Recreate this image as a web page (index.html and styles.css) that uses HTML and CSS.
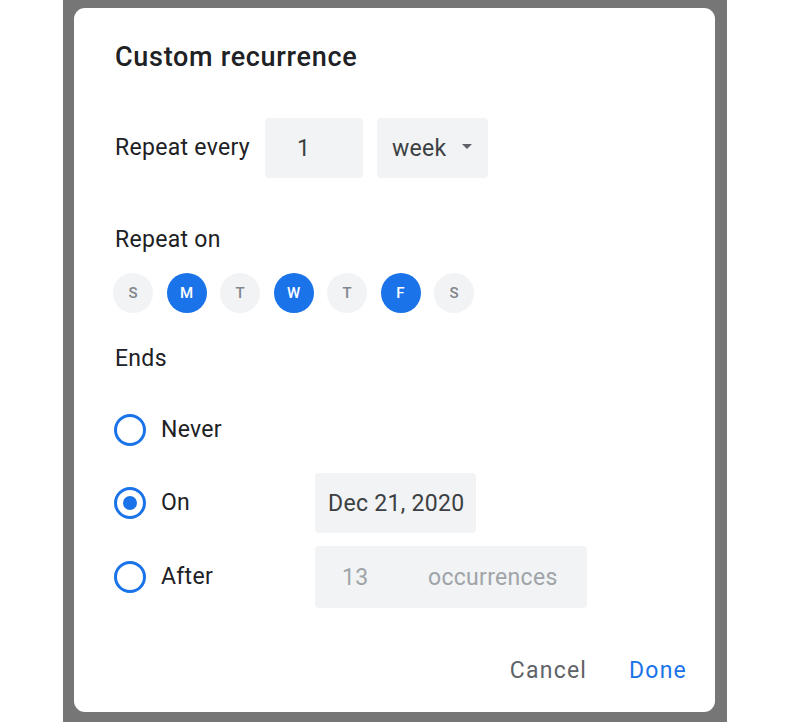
FILE: index.html
```html
<!DOCTYPE html>
<html lang="en">
<head>
<meta charset="utf-8">
<title>Custom recurrence</title>
<link rel="stylesheet" href="styles.css">
</head>
<body>
<div class="frame">
  <div class="dialog">
    <h1 class="title">Custom recurrence</h1>

    <div class="repeat-row">
      <span class="label">Repeat every</span>
      <div class="box box-num">1</div>
      <div class="box box-select">
        <span>week</span>
        <span class="caret"></span>
      </div>
    </div>

    <div class="label section-label">Repeat on</div>
    <div class="days">
      <span class="day">S</span>
      <span class="day on">M</span>
      <span class="day">T</span>
      <span class="day on">W</span>
      <span class="day">T</span>
      <span class="day on">F</span>
      <span class="day">S</span>
    </div>

    <div class="label ends-label">Ends</div>
    <div class="ends">
      <div class="end-row">
        <span class="radio"></span>
        <span class="label">Never</span>
      </div>
      <div class="end-row">
        <span class="radio checked"></span>
        <span class="label">On</span>
        <div class="box box-date">Dec 21, 2020</div>
      </div>
      <div class="end-row">
        <span class="radio"></span>
        <span class="label">After</span>
        <div class="box box-occ disabled">
          <span class="occ-num">13</span>
          <span>occurrences</span>
        </div>
      </div>
    </div>

    <div class="actions">
      <button class="btn btn-cancel">Cancel</button>
      <button class="btn btn-done">Done</button>
    </div>
  </div>
</div>
</body>
</html>
```

FILE: styles.css
```css
* { box-sizing: border-box; }

html, body {
  margin: 0;
  padding: 0;
  background: #ffffff;
}

body {
  font-family: Roboto, "Liberation Sans", Arial, sans-serif;
  color: #202124;
}

.frame {
  margin-left: 63px;
  width: 664px;
  height: 722px;
  background: #767676;
  padding: 8px 12px 10px 11px;
}

.dialog {
  background: #ffffff;
  border-radius: 11px;
  height: 704px;
  padding: 34px 28px 0 41px;
  display: flex;
  flex-direction: column;
}

.title {
  margin: 0;
  font-size: 27px;
  font-weight: 500;
  line-height: 30px;
  color: #202124;
  letter-spacing: 0.7px;
}

.label {
  font-size: 23px;
  line-height: 24px;
  letter-spacing: 0.3px;
  color: #202124;
}

.repeat-row {
  margin-top: 46px;
  display: flex;
  align-items: center;
  height: 60px;
}

.box {
  background: #f1f3f4;
  border-radius: 4px;
  height: 60px;
  display: flex;
  align-items: center;
  font-size: 23px;
  letter-spacing: 0.3px;
  color: #3c4043;
}

.repeat-row .label {
  width: 150px;
}

.box-num {
  width: 98px;
  padding-left: 32px;
}

.box-select {
  margin-left: 14px;
  width: 111px;
  padding-left: 15px;
}

.caret {
  margin-left: 15px;
  width: 0;
  height: 0;
  border-left: 5px solid transparent;
  border-right: 5px solid transparent;
  border-top: 5px solid #5f6368;
  margin-top: -4px;
}

.section-label {
  margin-top: 50px;
}

.days {
  margin-top: 21px;
  margin-left: -2px;
  display: flex;
  gap: 13.5px;
}

.day {
  width: 40px;
  height: 40px;
  border-radius: 50%;
  background: #f1f3f4;
  color: #80868b;
  font-size: 15px;
  font-weight: 500;
  display: flex;
  align-items: center;
  justify-content: center;
}

.day.on {
  background: #1a73e8;
  color: #ffffff;
}

.ends-label {
  margin-top: 34px;
}

.ends {
  margin-top: 29px;
  display: flex;
  flex-direction: column;
  gap: 13px;
}

.end-row {
  display: grid;
  grid-template-columns: 32px 169px auto;
  align-items: center;
  height: 60px;
  margin-left: -1px;
}

.end-row .label {
  padding-left: 15px;
}

.radio {
  width: 32px;
  height: 32px;
  border-radius: 50%;
  border: 3px solid #1a73e8;
  display: flex;
  align-items: center;
  justify-content: center;
}

.radio.checked::after {
  content: "";
  width: 14px;
  height: 14px;
  border-radius: 50%;
  background: #1a73e8;
}

.box-date {
  width: 161px;
  padding-left: 13px;
}

.box-occ {
  width: 272px;
  height: 62px;
  padding-left: 27px;
}

.disabled {
  color: #a0a4a8;
}

.occ-num {
  width: 86px;
}

.actions {
  margin-top: auto;
  margin-bottom: 29px;
  display: flex;
  justify-content: flex-end;
  gap: 42px;
}

.btn {
  background: none;
  border: none;
  padding: 0;
  font-family: Roboto, "Liberation Sans", Arial, sans-serif;
  font-size: 23px;
  font-weight: 400;
  line-height: 24px;
  letter-spacing: 1.2px;
}

.btn-cancel { color: #5f6368; }
.btn-done { color: #1a73e8; }
```
